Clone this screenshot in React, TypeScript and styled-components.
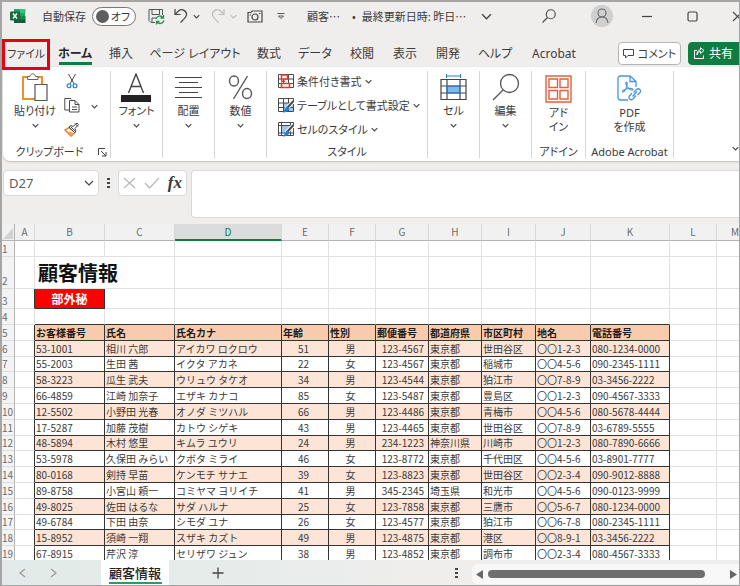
import React from "react";
import styled, { createGlobalStyle, css } from "styled-components";

const uiFont = `"Noto Sans", "Noto Sans CJK JP", sans-serif`;
const sheetFont = `"Noto Sans CJK JP", sans-serif`;
const green = "#107c41";
const ink = "#3b3b3b";

const GlobalStyle = createGlobalStyle`
  *, *::before, *::after { box-sizing: border-box; }
  body { margin: 0; background: #f0eeed; }
  button, input, textarea { font: inherit; color: inherit; }
  button { border: 0; padding: 0; background: none; white-space: nowrap; }
  svg { display: block; flex: none; fill: none; }
`;

const Frame = styled.div`
  height: 100vh;
  display: flex;
  flex-direction: column;
  overflow: hidden;
  border: solid #a5a5a5;
  border-width: 2px 1px 1px 2px;
  background: #f0eeed;
  color: ${ink};
  font-family: ${uiFont};
  font-size: 11px;
  font-feature-settings: "palt";
`;

/* ---------- title bar ---------- */

const TitleBar = styled.header`
  flex: none;
  height: 28px;
  display: flex;
  align-items: center;
  overflow: hidden;
`;

const Cluster = styled.div<{ $width: number; $gap?: number; $start?: number }>`
  flex: none;
  width: ${(p) => p.$width}px;
  padding-left: ${(p) => p.$start ?? 0}px;
  display: flex;
  align-items: center;
  gap: ${(p) => p.$gap ?? 8}px;
  white-space: nowrap;
`;

const DocTitle = styled(Cluster)`
  font-family: ${sheetFont};
  font-feature-settings: normal;
`;

const IconButton = styled.button`
  flex: none;
  display: flex;
  align-items: center;
  justify-content: center;
`;

const Toggle = styled.label`
  display: flex;
  align-items: center;
  gap: 6px;
`;

const Switch = styled.span`
  position: relative;
  width: 44px;
  height: 19px;
  display: flex;
  align-items: center;
  justify-content: flex-end;
  padding-right: 5px;
  border: 1px solid #777;
  border-radius: 10px;
  background: #fff;
`;

const SwitchInput = styled.input`
  appearance: none;
  position: absolute;
  left: 3px;
  top: 2px;
  width: 13px;
  height: 13px;
  margin: 0;
  border-radius: 50%;
  background: #5e5e5e;
`;

const Avatar = styled.button`
  width: 22px;
  height: 22px;
  display: flex;
  align-items: center;
  justify-content: center;
  border-radius: 50%;
  background: #cfcfcf;
`;

/* ---------- tabs ---------- */

const TabRow = styled.nav`
  flex: none;
  height: 37px;
  padding-top: 9px;
  display: flex;
  font-size: 12px;
`;

const Tab = styled.button<{ $width: number; $active?: boolean; $marked?: boolean }>`
  position: relative;
  flex: none;
  width: ${(p) => p.$width}px;
  display: flex;
  align-items: center;
  justify-content: center;
  ${(p) => p.$active && css`
    font-weight: 700;
    color: #262626;
    &::after {
      content: "";
      position: absolute;
      left: 9px;
      right: 8px;
      bottom: 2px;
      height: 3px;
      background: ${green};
    }
  `}
  ${(p) => p.$marked && css`
    z-index: 1;
    font-size: 11px;
    &::after {
      content: "";
      position: absolute;
      inset: 0 0 -3px 0;
      border: 3px solid #e60012;
    }
  `}
`;

const Actions = styled.div`
  flex: none;
  display: flex;
  align-items: center;
  gap: 7px;
  padding-left: 30px;
`;

const ActionButton = styled.button<{ $primary?: boolean }>`
  width: 63px;
  height: 23px;
  padding: 0 4px;
  display: flex;
  align-items: center;
  justify-content: ${(p) => (p.$primary ? "flex-start" : "center")};
  gap: 4px;
  border: 1px solid ${(p) => (p.$primary ? green : "#b5b5b5")};
  border-radius: 4px;
  background: ${(p) => (p.$primary ? green : "#fff")};
  color: ${(p) => (p.$primary ? "#fff" : ink)};
  font-size: ${(p) => (p.$primary ? 12 : 11)}px;
`;

/* ---------- ribbon ---------- */

const Ribbon = styled.section`
  flex: none;
  height: 94px;
  margin-left: 1px;
  padding: 4px 0 3px;
  display: flex;
  background: #fff;
  border-bottom-left-radius: 7px;
  box-shadow: 0 1px 2px #bdbdbd;
`;

const Group = styled.div<{ $width: number }>`
  flex: none;
  position: relative;
  width: ${(p) => p.$width}px;
  display: flex;
  flex-direction: column;
  justify-content: space-between;
  border-right: 1px solid #d6d6d6;
  white-space: nowrap;
`;

const GroupBody = styled.div`
  display: flex;
  justify-content: center;
`;

const ClipboardBody = styled.div`
  display: grid;
  grid-template-columns: 48px 26px 18px;
  padding-left: 8px;
  align-items: start;
`;

const GroupLabel = styled.div<{ $shift?: boolean }>`
  line-height: 12px;
  padding: 0 ${(p) => (p.$shift ? 14 : 0)}px 0 0;
  text-align: center;
`;

const Launcher = styled.button`
  position: absolute;
  right: 3px;
  bottom: 1px;
`;

const BigButton = styled.button<{ $two?: boolean }>`
  display: flex;
  flex-direction: column;
  align-items: center;
  line-height: ${(p) => (p.$two ? 14 : 16)}px;
`;

const BigIcon = styled.span<{ $two?: boolean }>`
  height: ${(p) => (p.$two ? 35 : 32)}px;
  display: flex;
  align-items: center;
`;

const ChevronSlot = styled.span`
  height: 12px;
  display: flex;
  align-items: center;
`;

const ToolStack = styled.div`
  display: flex;
  flex-direction: column;
  gap: 4px;
`;

const SmallTool = styled.button`
  height: 20px;
  display: flex;
  align-items: center;
  justify-content: center;
`;

const PasteMenu = styled.button`
  height: 70px;
  display: flex;
  align-items: center;
  justify-content: center;
`;

const StyleList = styled.div`
  padding-left: 11px;
  display: flex;
  flex-direction: column;
  gap: 4px;
`;

const StyleButton = styled.button`
  height: 20px;
  display: flex;
  align-items: center;
  gap: 3px;
`;

const Spacer = styled.div`
  flex: 1;
`;

const Collapse = styled.button`
  align-self: flex-end;
  margin-bottom: 6px;
`;

/* ---------- formula bar ---------- */

const FormulaBar = styled.section`
  flex: none;
  display: flex;
  align-items: flex-start;
  padding: 9px 0 6px 1px;
`;

const whiteBox = css`
  background: #fff;
  border: 1px solid #d9d9d9;
  border-radius: 4px;
`;

const NameBox = styled.div`
  ${whiteBox}
  width: 96px;
  height: 26px;
  padding: 0 4px 0 5px;
  display: flex;
  align-items: center;
  font-size: 13px;
  color: #5c5c5c;
`;

const NameInput = styled.input`
  flex: 1;
  min-width: 0;
  border: 0;
  padding: 0;
  outline: 0;
  background: none;
`;

const DotsSlot = styled.div`
  width: 19px;
  height: 26px;
  display: flex;
  align-items: center;
  justify-content: center;
`;

const EntryBox = styled.div`
  ${whiteBox}
  width: 69px;
  height: 26px;
  display: flex;
  align-items: center;
  justify-content: space-between;
  padding: 0 4px;
`;

const FxButton = styled.button`
  font-family: "Liberation Serif", serif;
  font-size: 17px;
  font-style: italic;
  font-weight: 700;
  line-height: 20px;
`;

const FormulaInput = styled.textarea`
  ${whiteBox}
  flex: 1;
  height: 48px;
  margin-left: 4px;
  border-right: 0;
  border-radius: 4px 0 0 4px;
  resize: none;
  outline: 0;
`;

/* ---------- sheet ---------- */

const SheetArea = styled.main`
  flex: 1 1 0;
  min-height: 0;
  overflow: hidden;
  background: #fff;
`;

const Sheet = styled.table`
  width: 100%;
  min-width: 752px;
  table-layout: fixed;
  border-collapse: separate;
  border-spacing: 0;
  font-family: ${sheetFont};
  font-size: 10px;
  line-height: 14px;
  font-feature-settings: normal;
  color: #3a3a3a;
`;

const Col = styled.col<{ $width?: number }>`
  ${(p) => p.$width && `width: ${p.$width}px;`}
`;

const ColHead = styled.th<{ $selected?: boolean }>`
  height: 17px;
  padding: 0;
  font-weight: 400;
  color: ${(p) => (p.$selected ? green : "#6b6b6b")};
  background: ${(p) => (p.$selected ? "#dcdcdc" : "#f1f1f1")};
  border-right: 1px solid #d8d8d8;
  border-bottom: ${(p) => (p.$selected ? `2px solid ${green}` : "1px solid #b4b4b4")};
`;

const Corner = styled(ColHead)`
  border-right-color: #b4b4b4;
  vertical-align: bottom;
  svg { margin-left: 1px; }
`;

const Body = styled.tbody`
  tr { height: 16px; }
  tr:nth-child(5n + 2) { height: 15px; }
`;

const Row = styled.tr<{ $height?: number }>`
  &&& { ${(p) => p.$height && `height: ${p.$height}px;`} }
`;

const RowHead = styled.th`
  padding: 0;
  overflow: hidden;
  text-align: left;
  vertical-align: bottom;
  font-weight: 400;
  color: #6b6b6b;
  background: #f4f4f4;
  border-right: 1px solid #b4b4b4;
  border-bottom: 1px solid #dcdcdc;
  white-space: nowrap;
`;

const Cell = styled.td<{ $inkRight?: boolean; $inkBottom?: boolean }>`
  padding: 0;
  border-right: 1px solid ${(p) => (p.$inkRight ? "#333" : "#e1e1e1")};
  border-bottom: 1px solid ${(p) => (p.$inkBottom ? "#333" : "#e1e1e1")};
  white-space: nowrap;
`;

const DataCell = styled(Cell)<{ $align: string; $banded: boolean }>`
  padding: 0 4px 0 1px;
  text-align: ${(p) => p.$align};
  background: ${(p) => (p.$banded ? "#fce4d6" : "#fff")};
`;

const FieldHead = styled(Cell).attrs({ as: "th" })`
  padding: 0 0 0 1px;
  text-align: left;
  font-weight: 700;
  color: #1c1c1c;
  background: #f8cbad;
`;

const TitleCell = styled(Cell)`
  padding-left: 3px;
  font-size: 20px;
  line-height: 28px;
  font-weight: 700;
  color: #111;
`;

const Stamp = styled(Cell)`
  background: #f00;
  color: #fff;
  text-align: center;
  font-size: 12px;
  font-weight: 700;
`;

/* ---------- sheet tabs ---------- */

const StatusRow = styled.footer`
  flex: none;
  height: 25px;
  display: flex;
  background: linear-gradient(90deg, #e2ebe9 0, #e6ecea 30%, #f0eeed 60%);
`;

const SheetNav = styled.div`
  width: 99px;
  display: flex;
  align-items: center;
  gap: 24px;
  padding-left: 17px;
`;

const SheetTab = styled.button`
  position: relative;
  width: 68px;
  background: #fff;
  font-size: 13px;
  font-weight: 500;
  line-height: 24px;
  color: #222;
  &::after {
    content: "";
    position: absolute;
    left: 8px;
    right: 7px;
    bottom: 1px;
    height: 2px;
    background: #2f9a5f;
  }
`;

const AddSheet = styled.button`
  width: 90px;
  margin-left: 4px;
  display: flex;
  align-items: center;
  justify-content: center;
`;

const ScrollStrip = styled.div`
  flex: none;
  width: 267px;
  height: 20px;
  margin-top: 4px;
  padding: 0 2px 0 4px;
  display: flex;
  align-items: center;
  border-radius: 6px 0 0 6px;
  background: #f8f8f8;
`;

const Track = styled.div`
  flex: 1;
  padding: 0 25px 0 5px;
`;

const Thumb = styled.div`
  height: 8px;
  border-radius: 4px;
  background: #6f6f6f;
`;

/* ---------- icons ---------- */

const Chevron = ({ size = 7, color = "#444" }: { size?: number; color?: string }) => (
  <svg width={size} height={size} viewBox="0 0 10 10" stroke={color} strokeWidth={size > 8 ? 1.2 : 1.6}>
    <path d="M1 3l4 4 4-4" />
  </svg>
);

const SideChevron = ({ flip }: { flip?: boolean }) => (
  <svg width="7" height="10" viewBox="0 0 7 10" stroke="#999" strokeWidth="1.2">
    <path d={flip ? "M1 1l5 4-5 4" : "M6 1L1 5l5 4"} />
  </svg>
);

const Dots = () => (
  <svg width="3" height="11" viewBox="0 0 3 11">
    <path fill="#444" d="M0 0h3v2H0zM0 4h3v2H0zM0 8h3v2H0z" />
  </svg>
);

const ExcelLogo = () => (
  <svg width="16" height="16" viewBox="0 0 16 16">
    <path fill="#21a366" d="M4 1h11v7H4z" />
    <path fill="#33c481" d="M10 1h5.500v4H10z" />
    <path fill="#107c41" d="M4 5h6v6H4z" />
    <path fill="#185c37" d="M4 11h11.500v4H4z" />
    <path fill="#138a4a" d="M10 8h5.500v3.500H10z" />
    <rect y="3.500" width="10" height="9" rx="1" fill="#0f703b" />
    <path stroke="#fff" strokeWidth="1.500" d="M3 5.500l4 5M7 5.500l-4 5" />
  </svg>
);

const SaveIcon = () => (
  <svg width="17" height="17" viewBox="0 0 17 17" stroke="#555">
    <path d="M7 14.500H3l-2-2V1.500h13.500V7" />
    <path d="M4 1.500v5h7.500v-5M4 14v-4h4" />
    <path stroke="#219653" strokeWidth="1.300" d="M8 11a4 4 0 0 1 7-1.500M15.500 7v3h-3M16 12.500a4 4 0 0 1-7 1.500M8.500 16.500v-3h3" />
  </svg>
);

const UndoIcon = ({ redo }: { redo?: boolean }) => (
  <svg width="16" height="16" viewBox="0 0 16 16" stroke={redo ? "#bcbcbc" : "#444"} strokeWidth="1.200">
    <path d={redo
      ? "M14 1v5.500H8.500M14 6.500L10.500 3C7 0 2 3 2.500 7c.3 2 1.500 3 6 7.500"
      : "M2 1v5.500h5.500M2 6.500L5.500 3C9 0 14 3 13.500 7c-.3 2-1.500 3-6 7.500"} />
  </svg>
);

const CameraIcon = () => (
  <svg width="16" height="13" viewBox="0 0 16 13" stroke="#4a4a4a" strokeWidth="1.200">
    <path d="M1 2.500h3l1-1.500h10v11H1z" />
    <circle cx="8" cy="7" r="3" />
    <path d="M2.500 5h1.500M12 3.500h1.500" />
  </svg>
);

const QuickMenuIcon = () => (
  <svg width="8" height="7" viewBox="0 0 8 7" stroke="#555">
    <path d="M.5.5h7M1.500 3L4 5.500 6.500 3z" />
  </svg>
);

const SearchIcon = ({ size }: { size: number }) => (
  <svg width={size} height={size} viewBox="0 0 28 28" stroke="#505050" strokeWidth={size > 20 ? 1.3 : 2.4}>
    <circle cx="17.500" cy="10.500" r="9" />
    <path d="M11 17L1 27" />
  </svg>
);

const PersonIcon = () => (
  <svg width="14" height="16" viewBox="0 0 14 16" stroke="#666" strokeWidth="1.100">
    <circle cx="7" cy="5" r="4" />
    <path d="M1 15c.5-4 3-6 6-6s5.500 2 6 6" />
  </svg>
);

const WindowIcon = ({ kind }: { kind: "min" | "max" | "close" }) => (
  <svg width="11" height="11" viewBox="0 0 11 11" stroke="#444" strokeWidth="1.200">
    {kind === "min" && <path d="M0 5.500h10" />}
    {kind === "max" && <rect x="1" y="1" width="9" height="9" rx="1.500" />}
    {kind === "close" && <path d="M1 1l9 9M10 1l-9 9" />}
  </svg>
);

const CommentIcon = () => (
  <svg width="11" height="11" viewBox="0 0 11 11" stroke="#444">
    <path d="M.5 1.500h10v6H5L2.500 10V7.500h-2z" />
  </svg>
);

const ShareIcon = () => (
  <svg width="12" height="12" viewBox="0 0 12 12" stroke="#fff">
    <path d="M4 3.500H1.500v8h9V8.500" />
    <path d="M4 8c.3-2.500 1.500-3.500 3.500-3.500v2L11 3.500 7.500.8v2C5 3 4 5 4 8z" />
  </svg>
);

const PasteIcon = () => (
  <svg width="26" height="28" viewBox="0 0 26 28">
    <path stroke="#e8912d" strokeWidth="2" d="M6 4H1v22h12M15 4h5v7" />
    <path stroke="#666" fill="#fff" d="M5.500 6.500V3.500h2.500c.3-3.500 5-3.500 5.500 0h2.500v3z" />
    <path stroke="#555" strokeWidth="1.200" fill="#fff" d="M13 11.500h12v16H13z" />
  </svg>
);

const CutIcon = () => (
  <svg width="12" height="16" viewBox="0 0 12 16">
    <path stroke="#4a4a4a" d="M2.500 1l5.500 10M9.500 1L4 11" />
    <g stroke="#2b88d8" strokeWidth="1.300">
      <circle cx="3" cy="12.800" r="1.900" />
      <circle cx="9" cy="12.800" r="1.900" />
    </g>
  </svg>
);

const CopyIcon = () => (
  <svg width="16" height="16" viewBox="0 0 16 16" stroke="#4a4a4a">
    <path d="M5 13H.8V1.500h6l1 1" />
    <path fill="#fff" d="M5.500 3.500h5.500l4 4V15H5.500z" />
    <path d="M11 3.500v4h4M8 10h5M8 12.500h5" />
  </svg>
);

const PainterIcon = () => (
  <svg width="16" height="15" viewBox="0 0 16 15">
    <path fill="#fff" stroke="#e07b24" strokeWidth="1.400" d="M5 5.500L1 8l6 6 4-3.500z" />
    <path fill="#f0a04b" d="M3 10l4 4 3-2.500-4-2z" />
    <path fill="#fff" stroke="#444" d="M5 5l2-1.500 2 1L13 1l1.500 1.500L11 6.500l1 2.500-1.500 1.500z" />
    <path stroke="#444" d="M6.500 4.500l5 5M11 1.500l3 3" />
  </svg>
);

const FontIcon = () => (
  <svg width="30" height="29" viewBox="0 0 30 29">
    <path stroke="#444" strokeWidth="1.400" d="M7.500 20L15 1l7.500 19M10 13.500h10" />
    <path fill="#222" d="M0 22h30v7H0z" />
  </svg>
);

const AlignIcon = () => (
  <svg width="27" height="22" viewBox="0 0 27 22" stroke="#444">
    <path d="M0 1.500h27M4 6.500h19M0 11.500h27M4 16.500h19M0 21.500h27" />
  </svg>
);

const PercentIcon = () => (
  <svg width="25" height="25" viewBox="0 0 25 25" stroke="#555" strokeWidth="1.400">
    <ellipse cx="6" cy="6" rx="4.500" ry="5" />
    <ellipse cx="19" cy="18.500" rx="4.500" ry="5" />
    <path d="M19.500 1L5.500 24" />
  </svg>
);

const GridIcon = ({ kind }: { kind: "conditional" | "table" | "cell" }) => (
  <svg width="16" height="15" viewBox="0 0 16 15">
    {kind === "cell" && <path fill="#9cc8f0" d="M3 4h10v7H3z" />}
    {kind === "table" && <path fill="#9cc8f0" d="M5 5h10v9H5z" />}
    <path stroke="#4a4a4a" d={kind === "cell"
      ? "M.5.5h15v13H.5zM3.500.5v13M.5 3.500h15M12.500.5v13M.5 11h15"
      : "M.5.5h15v13H.5zM5.500.5v13M10.500.5v13M.5 5h15M.5 9.500h15"} />
    {kind === "conditional" ? (
      <>
        <path fill="#fff" stroke="#e8382f" strokeWidth="1.600" d="M3.500 1h6v4h-6zM3.500 9.500h8v4h-8z" />
        <path stroke="#e8382f" strokeWidth="1.600" d="M4 7.200h3" />
        <path stroke="#2b88d8" d="M3.500 5.500v3" />
      </>
    ) : (
      <>
        <path stroke="#fff" strokeWidth="4" d="M15.500 3L8 11" />
        <path stroke="#4a4a4a" strokeWidth="2" d="M15.500 3L9.500 9.500" />
        <path fill="#1f7fd6" d="M9 8.500l2.500 2C11 13 8 14.500 4.500 14.500 7 13 6.500 9.500 9 8.500z" />
      </>
    )}
  </svg>
);

const CellsIcon = () => (
  <svg width="27" height="27" viewBox="0 0 27 27">
    <path stroke="#2b7cd3" d="M6.500 2h14M6.500 0v4M20.500 0v4" />
    <path fill="#7db8ee" d="M7 12h13v7H7z" />
    <path stroke="#444" strokeWidth="1.200" d="M1 5.500h25v20H1zM7 5.500v20M20 5.500v20M1 12h25M1 19h25" />
    <path stroke="#2b7cd3" d="M7 12h13v7H7z" />
  </svg>
);

const AddinIcon = () => (
  <svg width="27" height="28" viewBox="0 0 27 28" stroke="#e0623a" strokeWidth="1.400">
    <path d="M1 1h25v26H1zM4 4h8.500v8.500H4zM15 4h8v8.500h-8zM4 15.500h8.500V24H4zM15 15.500h8V24h-8z" />
  </svg>
);

const PdfIcon = () => (
  <svg width="25" height="27" viewBox="0 0 25 27" stroke="#4a94e0" strokeWidth="1.300">
    <path d="M11 25H3.500C2 25 1 24 1 22.500v-19C1 2 2 1 3.500 1H13l6 5.500V12" />
    <path d="M13 1v5.500h6" />
    <path d="M9.500 7c-1 0-1 2.500 1 5s4 3.500 5 3 0-2-3.500-1.500-6.500 2-6.500 3 2 .5 3.500-3S10.500 7 9.500 7z" strokeWidth="1.100" />
    <path d="M16.500 17.500l3-3c2.500-2 5 1 3.500 3l-2.500 2.500M19 20.500l-3 3.500c-2.500 2-5-1-3.500-3l2.500-3M15.500 21.500l4.500-5" />
  </svg>
);

const LauncherIcon = () => (
  <svg width="9" height="9" viewBox="0 0 9 9" stroke="#444">
    <path d="M.5 7V.5H7M3 3l5 5M8 4v4H4" />
  </svg>
);

const EntryIcon = ({ ok }: { ok?: boolean }) => (
  <svg width={ok ? 16 : 13} height="12" viewBox={ok ? "0 0 16 12" : "0 0 13 12"} stroke="#b9b9b9" strokeWidth="1.300">
    <path d={ok ? "M1 6l4.500 5L15 1" : "M1 1l11 10M12 1L1 11"} />
  </svg>
);

const CornerIcon = () => (
  <svg width="10" height="12" viewBox="0 0 10 12">
    <path fill="#d2d2d2" d="M10 0v11H0z" />
  </svg>
);

const PlusIcon = () => (
  <svg width="12" height="12" viewBox="0 0 12 12" stroke="#444" strokeWidth="1.300">
    <path d="M6 .5v11M.5 6h11" />
  </svg>
);

const ScrollArrow = ({ right }: { right?: boolean }) => (
  <svg width="7" height="9" viewBox="0 0 7 9">
    <path fill="#666" d={right ? "M0 0l7 4.500L0 9z" : "M7 0L0 4.500 7 9z"} />
  </svg>
);

/* ---------- data ---------- */

const tabs: { label: string; width: number }[] = [
  { label: "ファイル", width: 48 },
  { label: "ホーム", width: 50 },
  { label: "挿入", width: 42 },
  { label: "ページ レイアウト", width: 106 },
  { label: "数式", width: 42 },
  { label: "データ", width: 50 },
  { label: "校閲", width: 44 },
  { label: "表示", width: 42 },
  { label: "開発", width: 44 },
  { label: "ヘルプ", width: 50 },
  { label: "Acrobat", width: 68 },
];

const columns: [string, number?][] = [
  ["A", 20], ["B", 70], ["C", 70], ["D", 107], ["E", 47], ["F", 47], ["G", 53],
  ["H", 53], ["I", 54], ["J", 55], ["K", 79], ["L", 47], ["M"],
];

const fields = ["お客様番号", "氏名", "氏名カナ", "年齢", "性別", "郵便番号", "都道府県", "市区町村", "地名", "電話番号"];
const aligns = ["left", "left", "left", "center", "center", "right", "left", "left", "left", "left"];

const records = [
  ["53-1001", "相川 六郎", "アイカワ ロクロウ", "51", "男", "123-4567", "東京都", "世田谷区", "〇〇1-2-3", "080-1234-0000"],
  ["55-2003", "生田 茜", "イクタ アカネ", "22", "女", "123-4567", "東京都", "稲城市", "〇〇4-5-6", "090-2345-1111"],
  ["58-3223", "瓜生 武夫", "ウリュウ タケオ", "34", "男", "123-4544", "東京都", "狛江市", "〇〇7-8-9", "03-3456-2222"],
  ["66-4859", "江崎 加奈子", "エザキ カナコ", "85", "女", "123-5487", "東京都", "豊島区", "〇〇1-2-3", "090-4567-3333"],
  ["12-5502", "小野田 光春", "オノダ ミツハル", "66", "男", "123-4486", "東京都", "青梅市", "〇〇4-5-6", "080-5678-4444"],
  ["17-5287", "加藤 茂樹", "カトウ シゲキ", "43", "男", "123-4465", "東京都", "世田谷区", "〇〇7-8-9", "03-6789-5555"],
  ["48-5894", "木村 悠里", "キムラ ユウリ", "24", "男", "234-1223", "神奈川県", "川崎市", "〇〇1-2-3", "080-7890-6666"],
  ["53-5978", "久保田 みらい", "クボタ ミライ", "46", "女", "123-8772", "東京都", "千代田区", "〇〇4-5-6", "03-8901-7777"],
  ["80-0168", "剣持 早苗", "ケンモチ サナエ", "39", "女", "123-8823", "東京都", "世田谷区", "〇〇2-3-4", "090-9012-8888"],
  ["89-8758", "小宮山 頼一", "コミヤマ ヨリイチ", "41", "男", "345-2345", "埼玉県", "和光市", "〇〇4-5-6", "090-0123-9999"],
  ["49-8025", "佐田 はるな", "サダ ハルナ", "25", "女", "123-7858", "東京都", "三鷹市", "〇〇5-6-7", "080-1234-0000"],
  ["49-6784", "下田 由奈", "シモダ ユナ", "26", "女", "123-4577", "東京都", "狛江市", "〇〇6-7-8", "080-2345-1111"],
  ["15-8952", "須崎 一翔", "スザキ カズト", "49", "男", "123-4875", "東京都", "港区", "〇〇8-9-1", "03-3456-2222"],
  ["67-8915", "芹沢 淳", "セリザワ ジュン", "38", "男", "123-4852", "東京都", "調布市", "〇〇2-3-4", "080-4567-3333"],
];

const blanks = (count: number, inkBottom = false) =>
  Array.from({ length: count }, (_, i) => <Cell key={i} $inkBottom={inkBottom} />);

const BigTool = ({ icon, label, menu, second }: {
  icon: React.ReactNode; label: string; menu?: boolean; second?: string;
}) => (
  <BigButton $two={!!second}>
    <BigIcon $two={!!second}>{icon}</BigIcon>
    <span>{label}</span>
    {second && <span>{second}</span>}
    {menu && <ChevronSlot><Chevron /></ChevronSlot>}
  </BigButton>
);

export default function App() {
  return (
    <>
      <GlobalStyle />
      <Frame>
        <TitleBar>
          <Cluster $width={40} $start={8}><ExcelLogo /></Cluster>
          <Cluster $width={106}>
            <Toggle>
              自動保存
              <Switch><SwitchInput type="checkbox" role="switch" />オフ</Switch>
            </Toggle>
          </Cluster>
          <Cluster $width={99} $gap={5}>
            <IconButton aria-label="保存"><SaveIcon /></IconButton>
            <Cluster $width={32} $start={3} $gap={4}>
              <IconButton aria-label="元に戻す"><UndoIcon /></IconButton>
              <Chevron />
            </Cluster>
            <Cluster $width={32} $start={3} $gap={4}>
              <IconButton aria-label="やり直し"><UndoIcon redo /></IconButton>
              <Chevron color="#bbb" />
            </Cluster>
          </Cluster>
          <Cluster $width={60} $gap={14}>
            <IconButton aria-label="カメラ"><CameraIcon /></IconButton>
            <IconButton aria-label="クイック アクセス"><QuickMenuIcon /></IconButton>
          </Cluster>
          <DocTitle $width={45}>顧客…</DocTitle>
          <DocTitle $width={129} $gap={6}><span>•</span><span>最終更新日時: 昨日…</span></DocTitle>
          <Cluster $width={61}><IconButton aria-label="詳細"><Chevron size={11} /></IconButton></Cluster>
          <Cluster $width={49}><IconButton aria-label="検索"><SearchIcon size={14} /></IconButton></Cluster>
          <Cluster $width={51}><Avatar aria-label="アカウント"><PersonIcon /></Avatar></Cluster>
          <Cluster $width={45}><IconButton aria-label="最小化"><WindowIcon kind="min" /></IconButton></Cluster>
          <Cluster $width={45}><IconButton aria-label="最大化"><WindowIcon kind="max" /></IconButton></Cluster>
          <IconButton aria-label="閉じる"><WindowIcon kind="close" /></IconButton>
        </TitleBar>

        <TabRow>
          {tabs.map((t, i) => (
            <Tab key={t.label} $width={t.width} $active={i === 1} $marked={i === 0}>{t.label}</Tab>
          ))}
          <Actions>
            <ActionButton><CommentIcon />コメント</ActionButton>
            <ActionButton $primary><ShareIcon />共有</ActionButton>
          </Actions>
        </TabRow>

        <Ribbon>
          <Group $width={108}>
            <ClipboardBody>
              <BigTool icon={<PasteIcon />} label="貼り付け" menu />
              <ToolStack>
                <SmallTool aria-label="切り取り"><CutIcon /></SmallTool>
                <SmallTool aria-label="コピー"><CopyIcon /></SmallTool>
                <SmallTool aria-label="書式のコピー"><PainterIcon /></SmallTool>
              </ToolStack>
              <PasteMenu aria-label="コピーのメニュー"><Chevron /></PasteMenu>
            </ClipboardBody>
            <GroupLabel $shift>クリップボード</GroupLabel>
            <Launcher aria-label="クリップボードの設定"><LauncherIcon /></Launcher>
          </Group>
          <Group $width={52}>
            <GroupBody><BigTool icon={<FontIcon />} label="フォント" menu /></GroupBody>
          </Group>
          <Group $width={52}>
            <GroupBody><BigTool icon={<AlignIcon />} label="配置" menu /></GroupBody>
          </Group>
          <Group $width={52}>
            <GroupBody><BigTool icon={<PercentIcon />} label="数値" menu /></GroupBody>
          </Group>
          <Group $width={161}>
            <StyleList>
              <StyleButton><GridIcon kind="conditional" />条件付き書式<Chevron /></StyleButton>
              <StyleButton><GridIcon kind="table" />テーブルとして書式設定<Chevron /></StyleButton>
              <StyleButton><GridIcon kind="cell" />セルのスタイル<Chevron /></StyleButton>
            </StyleList>
            <GroupLabel>スタイル</GroupLabel>
          </Group>
          <Group $width={52}>
            <GroupBody><BigTool icon={<CellsIcon />} label="セル" menu /></GroupBody>
          </Group>
          <Group $width={52}>
            <GroupBody><BigTool icon={<SearchIcon size={28} />} label="編集" menu /></GroupBody>
          </Group>
          <Group $width={54}>
            <GroupBody><BigTool icon={<AddinIcon />} label="アド" second="イン" /></GroupBody>
            <GroupLabel>アドイン</GroupLabel>
          </Group>
          <Group $width={88}>
            <GroupBody><BigTool icon={<PdfIcon />} label="PDF" second="を作成" /></GroupBody>
            <GroupLabel>Adobe Acrobat</GroupLabel>
          </Group>
          <Spacer />
          <Collapse aria-label="リボンを折りたたむ"><Chevron /></Collapse>
        </Ribbon>

        <FormulaBar>
          <NameBox>
            <NameInput aria-label="名前ボックス" defaultValue="D27" />
            <IconButton aria-label="名前の一覧"><Chevron size={10} /></IconButton>
          </NameBox>
          <DotsSlot><Dots /></DotsSlot>
          <EntryBox>
            <IconButton aria-label="キャンセル"><EntryIcon /></IconButton>
            <IconButton aria-label="入力"><EntryIcon ok /></IconButton>
            <FxButton aria-label="関数の挿入">fx</FxButton>
          </EntryBox>
          <FormulaInput aria-label="数式バー" />
        </FormulaBar>

        <SheetArea>
          <Sheet>
            <colgroup>
              <Col $width={13} />
              {columns.map(([name, width]) => <Col key={name} $width={width} />)}
            </colgroup>
            <thead>
              <tr>
                <Corner><CornerIcon /></Corner>
                {columns.map(([name]) => (
                  <ColHead key={name} scope="col" $selected={name === "D"}>{name}</ColHead>
                ))}
              </tr>
            </thead>
            <Body>
              <Row><RowHead>1</RowHead>{blanks(13)}</Row>
              <Row $height={32}>
                <RowHead>2</RowHead>
                <Cell />
                <TitleCell colSpan={2}>顧客情報</TitleCell>
                {blanks(10)}
              </Row>
              <Row $height={20}>
                <RowHead>3</RowHead>
                <Cell $inkRight />
                <Stamp $inkRight $inkBottom>部外秘</Stamp>
                {blanks(11)}
              </Row>
              <Row>
                <RowHead>4</RowHead>
                <Cell />
                {blanks(10, true)}
                <Cell /><Cell />
              </Row>
              <Row>
                <RowHead>5</RowHead>
                <Cell $inkRight />
                {fields.map((f) => <FieldHead key={f} $inkRight $inkBottom>{f}</FieldHead>)}
                <Cell /><Cell />
              </Row>
              {records.map((record, r) => (
                <Row key={record[0]}>
                  <RowHead>{r + 6}</RowHead>
                  <Cell $inkRight />
                  {record.map((value, c) => (
                    <DataCell key={c} $inkRight $inkBottom $align={aligns[c]} $banded={r % 2 === 0}>
                      {value}
                    </DataCell>
                  ))}
                  <Cell /><Cell />
                </Row>
              ))}
            </Body>
          </Sheet>
        </SheetArea>

        <StatusRow>
          <SheetNav>
            <IconButton aria-label="前のシート"><SideChevron /></IconButton>
            <IconButton aria-label="次のシート"><SideChevron flip /></IconButton>
          </SheetNav>
          <SheetTab>顧客情報</SheetTab>
          <AddSheet aria-label="新しいシート"><PlusIcon /></AddSheet>
          <Spacer />
          <DotsSlot><Dots /></DotsSlot>
          <Cluster $width={6} />
          <ScrollStrip>
            <IconButton aria-label="左へスクロール"><ScrollArrow /></IconButton>
            <Track><Thumb role="scrollbar" aria-orientation="horizontal" aria-valuenow={0} /></Track>
            <IconButton aria-label="右へスクロール"><ScrollArrow right /></IconButton>
          </ScrollStrip>
        </StatusRow>
      </Frame>
    </>
  );
}
